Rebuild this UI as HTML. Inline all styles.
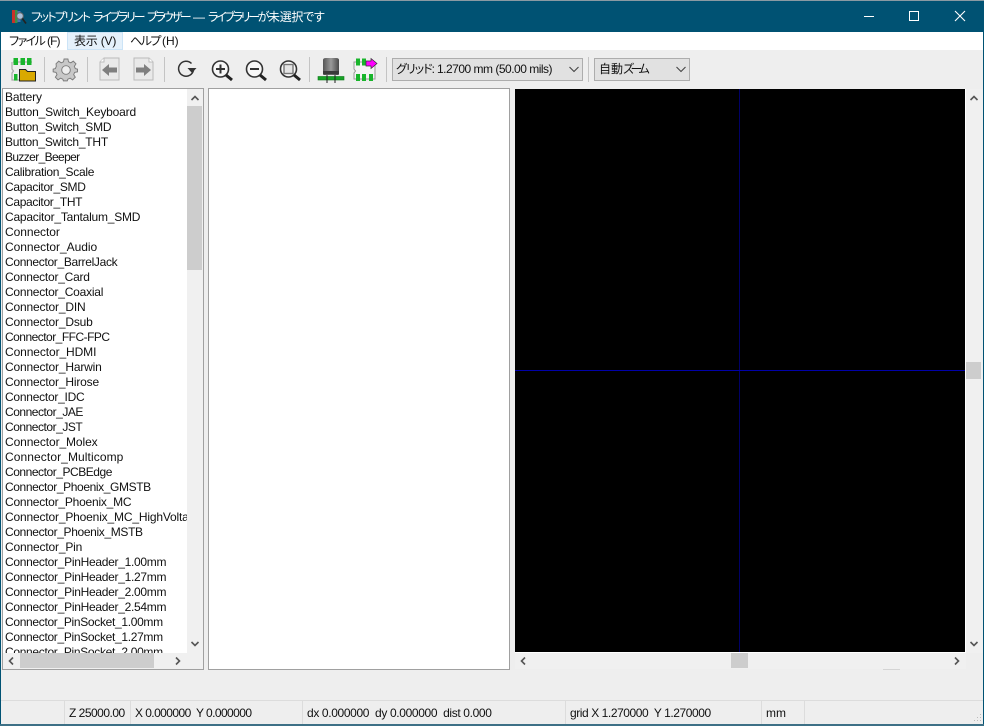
<!DOCTYPE html>
<html lang="ja"><head><meta charset="utf-8"><title>フットプリント ライブラリー ブラウザー</title>
<style>
html,body{margin:0;padding:0;width:984px;height:726px;overflow:hidden;background:#eee}
body{position:relative;font-family:"Liberation Sans","Noto Sans CJK JP",sans-serif;font-size:12px;color:#111}
.a{position:absolute}
.t{position:absolute;white-space:nowrap;line-height:15px}
.p{font-feature-settings:"palt" 1}
.w{color:#fff;top:9px;line-height:16px;letter-spacing:-1.6px}
.sep{position:absolute;top:57px;width:1px;height:25px;background:#c4c4c4}
.ss{position:absolute;top:701px;width:1px;height:23px;background:#dcdcdc}
#list{position:absolute;left:5px;top:90px;width:182px;height:563px;overflow:hidden;letter-spacing:-.17px}
#list div{height:15px;line-height:15px;white-space:nowrap}
.combo{position:absolute;top:58px;height:23px;background:#e1e1e1;border:1px solid #adadad;box-sizing:border-box}
svg{position:absolute;overflow:visible}
</style></head><body>
<div class="a" style="left:0;top:0;width:984px;height:726px;background:#eee"></div>
<div class="a" style="left:0;top:0;width:984px;height:1px;background:#8a9aa3"></div>
<div class="a" style="left:0;top:1px;width:984px;height:31px;background:#005273"></div>
<div class="a" style="left:0;top:32px;width:984px;height:18px;background:#fff"></div>
<div class="a" style="left:0;top:32px;width:1px;height:694px;background:#005273"></div>
<div class="a" style="left:983px;top:32px;width:1px;height:694px;background:#005273"></div>
<div class="a" style="left:0;top:724px;width:984px;height:2px;background:#3d7086"></div>

<!-- title icon -->
<svg style="left:12px;top:10px" width="15" height="15" viewBox="0 0 15 15">
<rect x="0" y="0" width="3" height="13" fill="#c8322a"/><rect x="3" y="0" width="2.500" height="13" fill="#3d8f45"/><rect x="5.500" y="1" width="3" height="11" fill="#4a6fb8"/>
<circle cx="8" cy="6" r="3.300" fill="#a9c0d9" stroke="#666" stroke-width="1"/><path d="M10.300 8.500l3.700 5" stroke="#222" stroke-width="1.700"/></svg>
<div class="t p w" style="left:31px">フットプリント</div>
<div class="t p w" style="left:93px;letter-spacing:-2.200px">ライブラリー</div>
<div class="t p w" style="left:147px;letter-spacing:-2.600px">ブラウザー</div>
<div class="t p w" style="left:193px;letter-spacing:0">—</div>
<div class="t p w" style="left:208px;letter-spacing:-2.300px">ライブラリーが</div>
<div class="t p w" style="left:268px;letter-spacing:-.3px">未選択です</div>
<!-- window buttons -->
<div class="a" style="left:864px;top:16px;width:10px;height:1px;background:#fff"></div>
<div class="a" style="left:909px;top:11px;width:8px;height:8px;border:1px solid #fff"></div>
<svg style="left:955px;top:11px" width="10" height="10" viewBox="0 0 10 10"><path d="M0 0L10 10M10 0L0 10" stroke="#fff" stroke-width="1.100"/></svg>

<!-- menu -->
<div class="a" style="left:67px;top:32px;width:56px;height:18px;background:#e5f1fb;border:1px solid #cce4f7;box-sizing:border-box"></div>
<div class="t p" style="left:9px;top:34px;letter-spacing:-1.600px">ファイル</div>
<div class="t p" style="left:47px;top:34px;letter-spacing:-.9px">(F)</div>
<div class="t p" style="left:74px;top:34px;letter-spacing:-.2px">表示 (V)</div>
<div class="t p" style="left:130px;top:34px;letter-spacing:-1.500px">ヘルプ</div>
<div class="t p" style="left:162px;top:34px">(H)</div>

<!-- toolbar -->
<svg style="left:11px;top:57px" width="26" height="25" viewBox="0 0 26 25">
<path d="M2 5h19M1 5v7l1.500 2-1.500 2v7h7" fill="none" stroke="#aaa" stroke-width="1.200"/>
<rect x="2.500" y="1" width="4.500" height="7" fill="#19b52c"/><rect x="9.500" y="1" width="4.500" height="7" fill="#19b52c"/><rect x="16" y="1" width="4.500" height="7" fill="#19b52c"/>
<rect x="3" y="17" width="3.500" height="6.500" fill="#19b52c"/>
<path d="M8.500 12.500h6l2 2h8v9.500h-16z" fill="#d9a900" stroke="#222" stroke-width="1"/></svg>
<div class="sep" style="left:44px"></div>
<svg style="left:54px;top:58px" width="24" height="23" viewBox="0 0 24 24"><path d="M10 1h4l.6 3 2.400 1 2.600-1.700 2.800 2.800L20.700 8.700l1 2.300 2.300.6v2.800l-3 .6-1 2.400 1.700 2.600-2.800 2.800-2.600-1.700-2.400 1-.6 1.800h-4l-.6-1.800-2.400-1-2.600 1.700-2.800-2.800 1.700-2.600-1-2.400-3-.6v-2.800l2.300-.6 1-2.300L1.600 6.100 4.400 3.300 7 5l2.400-1z" fill="#c8c8c8" stroke="#7c7c7c" stroke-width="1"/><circle cx="12" cy="12.500" r="4.500" fill="#eee" stroke="#7c7c7c" stroke-width="1"/></svg>
<div class="sep" style="left:87px"></div>
<svg style="left:99px;top:57px" width="21" height="24" viewBox="0 0 21 24"><path d="M5 1h15v22H1V5z" fill="#e9e9e9" stroke="#bbb"/><path d="M5 1v4H1" fill="#fff" stroke="#bbb"/><path d="M3 13l7-6v3.500h8v5h-8V19z" fill="#7f7f7f"/></svg>
<svg style="left:133px;top:57px" width="21" height="24" viewBox="0 0 21 24"><path d="M1 1h15l4 4v18H1z" fill="#e9e9e9" stroke="#bbb"/><path d="M16 1v4h4" fill="#fff" stroke="#bbb"/><path d="M18 13l-7-6v3.500H3v5h8V19z" fill="#7f7f7f"/></svg>
<div class="sep" style="left:164px"></div>
<svg style="left:177px;top:60px" width="20" height="19" viewBox="0 0 20 19"><path d="M14.500 3.500A7.500 7.500 0 1 0 16.500 10" fill="none" stroke="#333" stroke-width="1.500"/><path d="M11.500 9h9l-4.500 5z" fill="#333" transform="translate(-1 -1)"/></svg>
<svg style="left:211px;top:60px" width="23" height="22" viewBox="0 0 23 22"><circle cx="9.500" cy="9" r="8" fill="#f7f7f7" stroke="#333" stroke-width="1.600"/><path d="M5 9h9M9.500 4.500v9" stroke="#333" stroke-width="2"/><path d="M15 15l6 5" stroke="#222" stroke-width="3"/></svg>
<svg style="left:245px;top:60px" width="23" height="22" viewBox="0 0 23 22"><circle cx="9.500" cy="9" r="8" fill="#f7f7f7" stroke="#333" stroke-width="1.600"/><path d="M5 9h9" stroke="#333" stroke-width="2"/><path d="M15 15l6 5" stroke="#222" stroke-width="3"/></svg>
<svg style="left:279px;top:60px" width="23" height="22" viewBox="0 0 23 22"><circle cx="9.500" cy="9" r="8" fill="#f7f7f7" stroke="#333" stroke-width="1.600"/><rect x="5" y="4.500" width="9" height="9" fill="#e4e4e4" stroke="#777" stroke-width="1.400"/><path d="M15 15l6 5" stroke="#222" stroke-width="3"/></svg>
<div class="sep" style="left:309px"></div>
<svg style="left:318px;top:57px" width="27" height="26" viewBox="0 0 27 26"><defs><linearGradient id="c" x1="0" x2="1" y1="0" y2="0"><stop offset="0" stop-color="#555"/><stop offset=".5" stop-color="#9a9a9a"/><stop offset="1" stop-color="#4a4a4a"/></linearGradient></defs>
<path d="M5 3q0-2 3-2h10q3 0 3 2v14q0 1-2 1H7q-2 0-2-1z" fill="url(#c)"/><rect x="5" y="14" width="16" height="3.500" fill="#3a3a3a"/><rect x="0" y="19.500" width="26" height="3.500" fill="#17a326" stroke="#0d7a1a" stroke-width=".6"/><path d="M9 18v8M17 18v8" stroke="#222" stroke-width="1"/></svg>
<svg style="left:352px;top:57px" width="26" height="25" viewBox="0 0 26 25"><path d="M2 5h21v17H2v-6l1.500-2L2 12z" fill="#f4f4f4" stroke="#999" stroke-width="1"/>
<rect x="4" y="1.500" width="4" height="7" fill="#19b52c"/><rect x="10" y="1.500" width="4" height="7" fill="#19b52c"/><rect x="4" y="17" width="4" height="7" fill="#19b52c"/><rect x="10" y="17" width="4" height="7" fill="#19b52c"/><rect x="17" y="17" width="4" height="7" fill="#19b52c"/>
<path d="M14 4h5V1.500l6 5-6 5V9h-5z" fill="#f0f" stroke="#333" stroke-width=".7"/></svg>
<div class="sep" style="left:386px"></div>
<div class="combo" style="left:392px;width:191px"></div>
<div class="t p" style="left:396px;top:62px;letter-spacing:-1px">グリッド:</div>
<div class="t" style="left:437px;top:62px;letter-spacing:-.5px">1.2700 mm (50.00 mils)</div>
<svg style="left:569px;top:66px" width="10" height="7" viewBox="0 0 10 7"><path d="M.5 1L5 5.500 9.500 1" fill="none" stroke="#444" stroke-width="1.100"/></svg>
<div class="sep" style="left:588px"></div>
<div class="combo" style="left:594px;width:96px"></div>
<div class="t" style="left:599px;top:62px">自動</div>
<div class="t p" style="left:623px;top:62px;letter-spacing:-3.500px">ズーム</div>
<svg style="left:676px;top:66px" width="10" height="7" viewBox="0 0 10 7"><path d="M.5 1L5 5.500 9.500 1" fill="none" stroke="#444" stroke-width="1.100"/></svg>

<!-- library list -->
<div class="a" style="left:2px;top:88px;width:202px;height:582px;background:#fff;border:1px solid #a0a0a0;box-sizing:border-box"></div>
<div id="list"><div>Battery</div><div>Button_Switch_Keyboard</div><div style="letter-spacing:-.22px">Button_Switch_SMD</div><div style="letter-spacing:-.22px">Button_Switch_THT</div><div style="letter-spacing:-.63px">Buzzer_Beeper</div><div style="letter-spacing:-.29px">Calibration_Scale</div><div style="letter-spacing:-.32px">Capacitor_SMD</div><div style="letter-spacing:-.32px">Capacitor_THT</div><div style="letter-spacing:-.22px">Capacitor_Tantalum_SMD</div><div style="letter-spacing:-.06px">Connector</div><div style="letter-spacing:-.04px">Connector_Audio</div><div style="letter-spacing:-.32px">Connector_BarrelJack</div><div style="letter-spacing:-.24px">Connector_Card</div><div style="letter-spacing:-.23px">Connector_Coaxial</div><div>Connector_DIN</div><div>Connector_Dsub</div><div style="letter-spacing:-.52px">Connector_FFC-FPC</div><div style="letter-spacing:-.1px">Connector_HDMI</div><div>Connector_Harwin</div><div>Connector_Hirose</div><div style="letter-spacing:-.25px">Connector_IDC</div><div style="letter-spacing:-.47px">Connector_JAE</div><div style="letter-spacing:-.47px">Connector_JST</div><div style="letter-spacing:-.1px">Connector_Molex</div><div style="letter-spacing:.09px">Connector_Multicomp</div><div style="letter-spacing:-.46px">Connector_PCBEdge</div><div style="letter-spacing:-.39px">Connector_Phoenix_GMSTB</div><div style="letter-spacing:-.22px">Connector_Phoenix_MC</div><div>Connector_Phoenix_MC_HighVoltage</div><div style="letter-spacing:-.35px">Connector_Phoenix_MSTB</div><div>Connector_Pin</div><div style="letter-spacing:-.29px">Connector_PinHeader_1.00mm</div><div style="letter-spacing:-.29px">Connector_PinHeader_1.27mm</div><div style="letter-spacing:-.29px">Connector_PinHeader_2.00mm</div><div style="letter-spacing:-.29px">Connector_PinHeader_2.54mm</div><div style="letter-spacing:-.32px">Connector_PinSocket_1.00mm</div><div style="letter-spacing:-.32px">Connector_PinSocket_1.27mm</div><div style="letter-spacing:-.32px">Connector_PinSocket_2.00mm</div></div>
<div class="a" style="left:187px;top:89px;width:16px;height:564px;background:#f0f0f0"></div>
<div class="a" style="left:187px;top:106px;width:15px;height:164px;background:#cdcdcd"></div>
<div class="a" style="left:3px;top:653px;width:200px;height:16px;background:#f0f0f0"></div>
<div class="a" style="left:20px;top:653px;width:134px;height:15px;background:#cdcdcd"></div>
<svg style="left:191px;top:95px" width="8" height="6" viewBox="0 0 8 6"><path d="M.5 5L4 1.500 7.500 5" fill="none" stroke="#555" stroke-width="1.600"/></svg>
<svg style="left:191px;top:641px" width="8" height="6" viewBox="0 0 8 6"><path d="M.5 1L4 4.500 7.500 1" fill="none" stroke="#555" stroke-width="1.600"/></svg>
<svg style="left:8px;top:657px" width="6" height="8" viewBox="0 0 6 8"><path d="M5 .5L1.500 4 5 7.500" fill="none" stroke="#555" stroke-width="1.600"/></svg>
<svg style="left:175px;top:657px" width="6" height="8" viewBox="0 0 6 8"><path d="M1 .5L4.500 4 1 7.500" fill="none" stroke="#555" stroke-width="1.600"/></svg>

<!-- middle list -->
<div class="a" style="left:208px;top:88px;width:302px;height:582px;background:#fff;border:1px solid #a0a0a0;box-sizing:border-box"></div>

<!-- canvas -->
<div class="a" style="left:515px;top:89px;width:450px;height:563px;background:#000"></div>
<div class="a" style="left:739px;top:89px;width:1px;height:563px;background:#000068"></div>
<div class="a" style="left:515px;top:370px;width:450px;height:1px;background:#0000a8"></div>
<div class="a" style="left:965px;top:89px;width:1px;height:564px;background:#fff"></div>
<div class="a" style="left:515px;top:652px;width:451px;height:1px;background:#fff"></div>
<div class="a" style="left:966px;top:89px;width:17px;height:564px;background:#f0f0f0"></div>
<div class="a" style="left:966px;top:362px;width:15px;height:17px;background:#cdcdcd"></div>
<div class="a" style="left:515px;top:653px;width:451px;height:16px;background:#f0f0f0"></div>
<div class="a" style="left:731px;top:653px;width:17px;height:15px;background:#cdcdcd"></div>
<div class="a" style="left:883px;top:669px;width:17px;height:1px;background:#d4d4d4"></div>
<svg style="left:970px;top:95px" width="8" height="6" viewBox="0 0 8 6"><path d="M.5 5L4 1.500 7.500 5" fill="none" stroke="#555" stroke-width="1.600"/></svg>
<svg style="left:970px;top:641px" width="8" height="6" viewBox="0 0 8 6"><path d="M.5 1L4 4.500 7.500 1" fill="none" stroke="#555" stroke-width="1.600"/></svg>
<svg style="left:520px;top:657px" width="6" height="8" viewBox="0 0 6 8"><path d="M5 .5L1.500 4 5 7.500" fill="none" stroke="#555" stroke-width="1.600"/></svg>
<svg style="left:954px;top:657px" width="6" height="8" viewBox="0 0 6 8"><path d="M1 .5L4.500 4 1 7.500" fill="none" stroke="#555" stroke-width="1.600"/></svg>

<!-- status bar -->
<div class="a" style="left:1px;top:700px;width:982px;height:1px;background:#dcdcdc"></div>
<div class="ss" style="left:64px"></div><div class="ss" style="left:130px"></div><div class="ss" style="left:302px"></div><div class="ss" style="left:565px"></div><div class="ss" style="left:761px"></div><div class="ss" style="left:804px"></div>
<div class="t" style="left:69px;top:706px;letter-spacing:-.5px">Z 25000.00</div>
<div class="t" style="left:135px;top:706px;letter-spacing:-.57px">X 0.000000&nbsp; Y 0.000000</div>
<div class="t" style="left:307px;top:706px;letter-spacing:-.36px">dx 0.000000&nbsp; dy 0.000000&nbsp; dist 0.000</div>
<div class="t" style="left:570px;top:706px;letter-spacing:-.43px">grid X 1.270000&nbsp; Y 1.270000</div>
<div class="t" style="left:766px;top:706px">mm</div>
<svg style="left:972px;top:713px" width="10" height="10" viewBox="0 0 10 10"><path d="M8 1h1v1H8zM5 4h1v1H5zM8 4h1v1H8zM2 7h1v1H2zM5 7h1v1H5zM8 7h1v1H8z" fill="#bbb"/></svg>
</body></html>
